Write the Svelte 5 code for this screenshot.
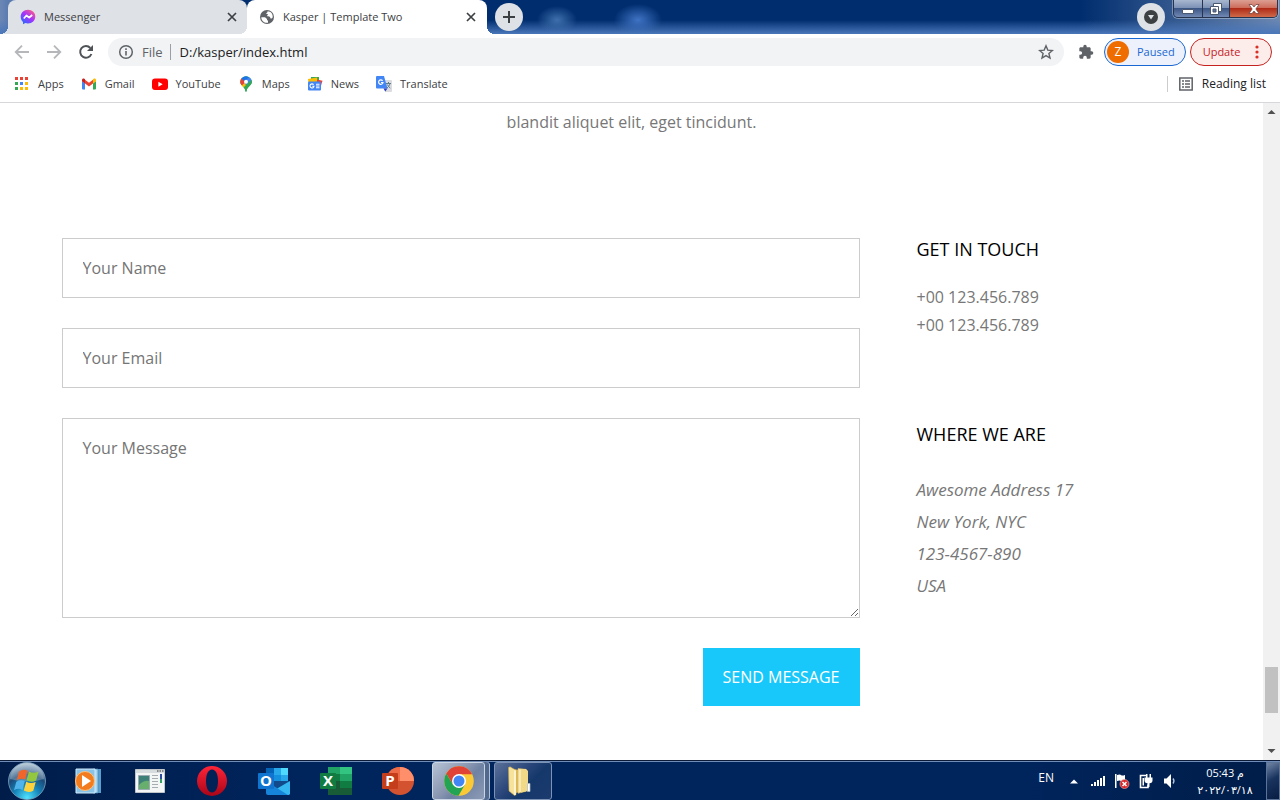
<script>
  const address = ['Awesome Address 17', 'New York, NYC', '123-4567-890', 'USA'];
  const dots = ['#ea4335', '#ea4335', '#ea4335', '#34a853', '#4285f4', '#fbbc04', '#34a853', '#fbbc04', '#fbbc04'];
  const bars = [2, 4, 6, 8, 10];
</script>

<div class="screen">
  <header class="strip">
    <nav class="tabs" aria-label="Tabs">
      <div class="tab idle">
        <svg width="16" height="16" viewBox="0 0 16 16">
          <defs>
            <linearGradient id="msg" x1="0" y1="1" x2=".8" y2="0">
              <stop offset="0" stop-color="#0a7cff" /><stop offset=".55" stop-color="#a033ff" /><stop offset="1" stop-color="#ff5c87" />
            </linearGradient>
          </defs>
          <path fill="url(#msg)" d="M8 .7C3.800.7.7 3.700.7 7.700c0 2.100.9 3.900 2.300 5.200v2.400l2.300-1.200c.9.200 1.700.3 2.700.3 4.200 0 7.300-3 7.300-7C15.300 3.700 12.200.7 8 .7z" />
          <path fill="none" stroke="#fff" stroke-width="1.700" stroke-linejoin="round" d="M3.800 9.500 6.400 6.500l2.800 2.200 3-2.700" />
        </svg>
        <span>Messenger</span>
        <button class="x" aria-label="Close Messenger"><svg width="10" height="10" viewBox="0 0 10 10"><path d="M1 1l8 8m0-8l-8 8" stroke="#3c4043" stroke-width="1.700" /></svg></button>
      </div>
      <div class="tab live">
        <svg width="16" height="16" viewBox="0 0 16 16">
          <circle cx="8" cy="8" r="7" fill="#5f6368" />
          <path fill="#fff" d="M2.300 8.200 6 8.300 8 10v1.200l1 .3v2.200c-3.600.6-6.700-2-6.700-5.500zM8.600 2.300C12 2.400 14 5 13.700 8.300c-.4.800-.9 1.300-1.700 1.300-.7 0-.6-1.400-1.300-1.900-.8-.4-2.500.2-2.500-.9 0-1 .8-.9.8-1.500s-1.600-.1-1.600-.9.900-.600 1-1.200z" />
        </svg>
        <span>Kasper | Template Two</span>
        <button class="x" aria-label="Close Kasper"><svg width="10" height="10" viewBox="0 0 10 10"><path d="M1 1l8 8m0-8l-8 8" stroke="#3c4043" stroke-width="1.700" /></svg></button>
      </div>
    </nav>
    <button class="round" aria-label="New tab"><svg width="14" height="14" viewBox="0 0 14 14"><path d="M7 1v12M1 7h12" stroke="#3c4043" stroke-width="2" /></svg></button>
    <div class="grow"></div>
    <button class="round search" aria-label="Search tabs"><svg width="14" height="14" viewBox="0 0 14 14"><circle cx="7" cy="7" r="7" fill="#3c4043" /><path d="M4 5h6L7 9.500z" fill="#dee1e6" /></svg></button>
    <div class="caption">
      <button class="min" aria-label="Minimize"><svg width="12" height="12" viewBox="0 0 12 12"><path d="M.5 6.500h11v4H.5z" fill="#fff" stroke="#4a5870" /></svg></button>
      <button aria-label="Restore"><svg width="12" height="12" viewBox="0 0 12 12"><path d="M3.500.5h8v8h-8z" fill="#fff" stroke="#4a5870" /><path d="M.5 3.500h8v8h-8z" fill="#fff" stroke="#4a5870" /><path d="M3 6h3v3H3z" fill="#5f759c" stroke="#4a5870" /></svg></button>
      <button class="close" aria-label="Close window"><svg width="12" height="10" viewBox="0 0 12 10"><path d="M1 .5h3l2 2.500 2-2.500h3L7.800 5l3.200 4.500H8L6 7 4 9.500H1L4.200 5z" fill="#fff" stroke="#6b3a3a" stroke-width=".7" /></svg></button>
    </div>
  </header>

  <div class="toolbar">
    <button class="tool" aria-label="Back"><svg width="16" height="16" viewBox="0 0 16 16"><path d="M15 8H2M8 1.700 1.700 8 8 14.300" fill="none" stroke="#b5b7ba" stroke-width="1.800" /></svg></button>
    <button class="tool" aria-label="Forward"><svg width="16" height="16" viewBox="0 0 16 16"><path d="M1 8h13M8 1.700 14.300 8 8 14.300" fill="none" stroke="#b5b7ba" stroke-width="1.800" /></svg></button>
    <button class="tool" aria-label="Reload"><svg width="16" height="16" viewBox="0 0 16 16"><path d="M13.400 10A5.800 5.800 0 1 1 12.300 4" fill="none" stroke="#4f5357" stroke-width="2" /><path d="M15 1v6H9z" fill="#4f5357" /></svg></button>
    <div class="omnibox">
      <svg width="16" height="16" viewBox="0 0 16 16"><circle cx="8" cy="8" r="6.300" fill="none" stroke="#5f6368" stroke-width="1.500" /><path d="M8 7v4.500M8 4.300v1.600" stroke="#5f6368" stroke-width="1.600" /></svg>
      <span class="file">File</span>
      <input aria-label="Address" value="D:/kasper/index.html" />
      <button class="tool" aria-label="Bookmark"><svg width="16" height="16" viewBox="0 0 16 16"><path d="M8 1.800l1.800 4.300 4.600.4-3.500 3 1.100 4.600L8 11.600l-4 2.500 1.100-4.600-3.500-3 4.600-.4z" fill="none" stroke="#5f6368" stroke-width="1.400" /></svg></button>
    </div>
    <button class="tool ext" aria-label="Extensions"><svg width="16" height="16" viewBox="0 0 24 24"><path fill="#5f6368" d="M20.500 11H19V7c0-1.100-.9-2-2-2h-4V3.500a2.500 2.500 0 0 0-5 0V5H4c-1.100 0-2 .9-2 2v3.800h1.500a2.700 2.700 0 0 1 0 5.400H2V20c0 1.100.9 2 2 2h3.800v-1.500a2.700 2.700 0 0 1 5.400 0V22H17c1.100 0 2-.9 2-2v-4h1.500a2.500 2.500 0 0 0 0-5z" /></svg></button>
    <button class="pill paused"><b>Z</b>Paused</button>
    <button class="pill update">Update<svg width="4" height="14" viewBox="0 0 4 14" fill="#d93025"><circle cx="2" cy="2" r="1.600" /><circle cx="2" cy="7" r="1.600" /><circle cx="2" cy="12" r="1.600" /></svg></button>
  </div>

  <nav class="bookmarks" aria-label="Bookmarks">
    <a href="#apps"><svg width="16" height="16" viewBox="0 0 16 16">{#each dots as c, i}<rect x={1 + (i % 3) * 5} y={1 + Math.floor(i / 3) * 5} width="3" height="3" fill={c} />{/each}</svg>Apps</a>
    <a href="#gmail"><svg width="16" height="16" viewBox="0 0 16 16"><path fill="#4285f4" d="M1 5l3 2.300V13.500H2a1 1 0 0 1-1-1z" /><path fill="#34a853" d="M12 7.300 15 5v7.500a1 1 0 0 1-1 1h-2z" /><path fill="#ea4335" d="M4 3.700l4 3 4-3v3.900l-4 3-4-3z" /><path fill="#c5221f" d="M1 4c0-1.500 1.400-2 2.400-1.200L4 3.300v4.300L1 5.300z" /><path fill="#fbbc04" d="M15 4c0-1.500-1.400-2-2.400-1.200l-.6.5v4.300l3-2.300z" /></svg>Gmail</a>
    <a href="#youtube"><svg width="16" height="16" viewBox="0 0 16 16"><rect y="2.500" width="16" height="11.500" rx="3" fill="#f00" /><path d="M6.400 5.700v5L10.700 8.200z" fill="#fff" /></svg>YouTube</a>
    <a href="#maps"><svg width="16" height="16" viewBox="0 0 16 16"><defs><clipPath id="pin"><path d="M8 .2a5.800 5.800 0 0 0-5.800 5.800C2.200 9.700 7 10.500 7.400 15c.1.900 1.100.9 1.200 0C9 10.500 13.800 9.700 13.800 6A5.800 5.800 0 0 0 8 .2z" /></clipPath></defs><g clip-path="url(#pin)"><path fill="#34a853" d="M0 0h16v16H0z" /><path fill="#fbbc04" d="M2 10 10 1v7l-5 5z" /><path fill="#4285f4" d="M6 6 12 0h4v5l-7 6z" /><path fill="#ea4335" d="M0 2h4l4 4-5 4z" /><path fill="#1a73e8" d="M3 2 8-1l3 2-4 5z" /><path fill="#34a853" d="M5 12 13 4h3v12H6z" /></g><circle cx="8" cy="5.800" r="2" fill="#fff" /></svg>Maps</a>
    <a href="#news"><svg width="16" height="16" viewBox="0 0 16 16"><path fill="#34a853" d="M4 1h8v5H4z" /><path fill="#fbbc04" d="M1 3l9-1.500.5 4L1.500 7z" /><path fill="#ea4335" d="M10 3.500l5.500 1.200-1.500 5-4-1z" /><rect x="1" y="5.500" width="13" height="9" rx="1" fill="#4285f4" /><path fill="none" stroke="#fff" stroke-width="1.100" d="M6.600 8.700A2 2 0 1 0 7 10.200H5.300M9 8.300h3.500M9 10h3.500M9 11.800h3.500" /></svg>News</a>
    <a href="#translate"><svg width="16" height="16" viewBox="0 0 16 16"><path fill="#dadce0" d="M6 4h9a1 1 0 0 1 1 1v10a1 1 0 0 1-1 1H9z" /><path fill="#4285f4" d="M1 0h7l3.500 12.500H1a1 1 0 0 1-1-1V1a1 1 0 0 1 1-1z" /><path fill="#3040c0" d="M7.500 12.500h4L9.300 15.500z" /><path fill="none" stroke="#fff" stroke-width="1.200" d="M6.600 4.800A2.200 2.200 0 1 0 7 6.500H5" /><path fill="none" stroke="#607d8b" d="M10 7.500h5M12.500 6v1.500M14 7.500c-.5 2-1.800 3.500-3 4.500M11.300 8.500c.7 1.500 1.700 2.600 3 3.500" /></svg>Translate</a>
    <div class="grow"></div>
    <a href="#reading" class="reading"><svg width="16" height="16" viewBox="0 0 16 16"><path fill="none" stroke="#5f6368" stroke-width="1.500" d="M1.800 2h12.400v12H1.800z" /><path stroke="#5f6368" stroke-width="1.500" d="M4 5h2M7 5h5M4 8h2M7 8h5M4 11h2M7 11h5" /></svg>Reading list</a>
  </nav>

  <div class="view">
    <main>
      <p class="lead">blandit aliquet elit, eget tincidunt.</p>
      <div class="contact">
        <form onsubmit={(e) => e.preventDefault()}>
          <input type="text" aria-label="Your Name" placeholder="Your Name" />
          <input type="email" aria-label="Your Email" placeholder="Your Email" />
          <textarea aria-label="Your Message" placeholder="Your Message"></textarea>
          <button type="submit">SEND MESSAGE</button>
        </form>
        <aside>
          <h4>GET IN TOUCH</h4>
          <p class="phones">+00 123.456.789<br />+00 123.456.789</p>
          <h4>WHERE WE ARE</h4>
          <address>{#each address as line}<span>{line}</span>{/each}</address>
        </aside>
      </div>
    </main>
    <div class="scroll">
      <svg width="17" height="17" viewBox="0 0 17 17"><path d="M4.500 11h8L8.500 7z" fill="#505050" /></svg>
      <div class="track"><div class="thumb"></div></div>
      <svg width="17" height="17" viewBox="0 0 17 17"><path d="M4.500 6h8L8.500 10z" fill="#505050" /></svg>
    </div>
  </div>

  <footer class="taskbar">
    <button class="start" aria-label="Start">
      <svg width="40" height="40" viewBox="0 0 40 40">
        <defs><radialGradient id="orb" cx=".5" cy=".95" r=".9"><stop offset="0" stop-color="#4fe3ff" /><stop offset=".4" stop-color="#1583b8" /><stop offset=".7" stop-color="#1c4a78" /><stop offset="1" stop-color="#9ab4c8" /></radialGradient></defs>
        <circle cx="20" cy="20" r="18.500" fill="url(#orb)" stroke="#8fb3cc" stroke-opacity=".7" />
        <path d="M3 18a17 16 0 0 1 34 0q-17 5-34 0z" fill="#fff" opacity=".25" />
        <path d="M12 10.500q4.500-3 8.500-.8L18.200 18.600q-4-2-8.500.6z" fill="#f0652a" />
        <path d="M22 10.500q4.500 2.500 9.500 0l-2.400 9q-4.700 2.500-9.500-.2z" fill="#93c83e" />
        <path d="M9.300 20.700q4.500-2.600 8.500-.6l-2.300 8.800q-4-2.300-8.500.4z" fill="#4fb4ec" />
        <path d="M19.200 20.800q4.700 2.500 9.500.2l-2.400 8.800q-4.800 2.500-9.500-.2z" fill="#fdd23c" />
      </svg>
    </button>
    <button class="app" aria-label="Media Player"><svg width="30" height="30" viewBox="0 0 30 30"><path fill="#5aa0cf" d="M22 3h6v24h-6z" /><path fill="#a6d5ef" d="M20 3h5v24h-5z" stroke="#4384b4" stroke-width=".7" /><path fill="#89c3e8" stroke="#d2ecfb" d="M3 3h19v24H3z" /><circle cx="12" cy="15" r="9.500" fill="#f37d1e" stroke="#ffc27e" /><path d="M9 9v12l9-6z" fill="#fff" /></svg></button>
    <button class="app" aria-label="Viewer"><svg width="30" height="30" viewBox="0 0 30 30"><path fill="#f4f5f5" stroke="#bfc5c9" d="M.5 3.500h29v23H.5z" /><path fill="#d7dcdf" d="M1 4h28v3H1z" /><path d="M22 5h1.500M24.500 5H26M27 5h1.500" stroke="#333" /><path fill="#3d8078" stroke="#9baab0" d="M3.500 9.500h11v14h-11z" /><path fill="#68ae6c" d="M4 19q5-5 10-4v8H4z" /><path d="M17 9.500h6M17 12.500h6M17 15.500h6M17 18.500h6M17 21.500h6" stroke="#a5adb1" /><path fill="#284ba0" d="M25 8h2v5h-2z" /><path fill="#36a063" d="M25 13h2v4h-2z" /></svg></button>
    <button class="app" aria-label="Opera"><svg width="30" height="30" viewBox="0 0 30 30"><defs><linearGradient id="op" x2="0" y2="1"><stop stop-color="#ff2438" /><stop offset="1" stop-color="#a80518" /></linearGradient></defs><path fill="url(#op)" fill-rule="evenodd" d="M15 0a15 15 0 1 0 0 30 15 15 0 0 0 0-30zm0 3.500c4 0 6 5 6 11.500s-2 11.500-6 11.500S9 21.500 9 15s2-11.500 6-11.500z" /></svg></button>
    <button class="app" aria-label="Outlook"><svg width="32" height="30" viewBox="0 0 32 30"><path fill="#1490df" d="M8 2h22v20H8z" /><path fill="#0364b8" d="M8 2h8v7H8z" /><path fill="#28a8ea" d="M16 2h7v7h-7zM23 9h7v7h-7z" /><path fill="#50d9ff" d="M23 2h7v7h-7z" /><path fill="#0a5aa5" d="M8 17h7v6H8z" /><path fill="#114b8b" d="M8 15h24l-12 9z" /><path fill="#35b8f1" d="M32 15v13a2 2 0 0 1-2 1H10l10-7z" /><path fill="#1685d9" d="M8 15l22 14H10a2 2 0 0 1-2-2z" /><rect y="7" width="16" height="16" rx="1" fill="#0f75d0" /><text x="8" y="20" text-anchor="middle">O</text></svg></button>
    <button class="app" aria-label="Excel"><svg width="32" height="30" viewBox="0 0 32 30"><path fill="#21a366" d="M8 1h12v7H8z" /><path fill="#33c481" d="M20 1h12v7H20z" /><path fill="#107c41" d="M8 8h12v7H8z" /><path fill="#21a366" d="M20 8h12v7H20z" /><path fill="#185c37" d="M8 15h12v14H8zM20 22h12v7H20z" /><path fill="#107c41" d="M20 15h12v7H20z" /><rect y="7" width="16" height="16" rx="1" fill="#107c41" /><text x="8" y="20" text-anchor="middle">X</text></svg></button>
    <button class="app" aria-label="PowerPoint"><svg width="32" height="30" viewBox="0 0 32 30"><circle cx="18" cy="15" r="14" fill="#d35230" /><path fill="#ed6c47" d="M4 15A14 14 0 0 1 18 1v14z" /><path fill="#ff8f6b" d="M18 1a14 14 0 0 1 14 14H18z" /><rect y="7" width="16" height="16" rx="1" fill="#c43e1c" /><text x="8" y="20" text-anchor="middle">P</text></svg></button>
    <button class="app open" aria-label="Chrome"><svg width="30" height="30" viewBox="0 0 30 30"><circle cx="15" cy="15" r="14.800" fill="#fbc935" /><path fill="#e04335" d="M15 15V8.300h13.200A14.800 14.800 0 0 0 2.200 7.600L9 18.500z" /><path fill="#23a455" d="M2.200 7.600A14.800 14.800 0 0 0 14.500 29.800L21 18.500 15 15l-6 3.500z" /><circle cx="15" cy="15" r="7" fill="#fff" /><circle cx="15" cy="15" r="5.500" fill="#4285f4" /></svg></button>
    <button class="app window" aria-label="Explorer">
      <svg width="30" height="32" viewBox="0 0 30 32">
        <path fill="#e3bf5c" d="M5 3.500 14 5v22l-6 2z" />
        <path fill="#f8eab2" stroke="#d0ad54" stroke-width=".6" d="M13 3.500l8 .8v22l-8 2z" />
        <path fill="#f1d988" d="M16 4.200l5-.2 2 2v20l-7 1.500z" />
        <path fill="#f6e29a" stroke="#caa64b" stroke-width=".6" d="M3.500 2.500 5 1.800l6 3.400v24.500l-1.500.8-5.500-4.500z" />
        <path fill="#fbf3cd" d="M9 5.500l2-.3v24.500l-2 .3z" />
        <path fill="#fff" stroke="#a9bdc6" stroke-width=".7" d="M22.500 18.500h2.500v8h-2.500z" />
      </svg>
    </button>
    <div class="grow"></div>
    <span class="lang">EN</span>
    <div class="tray">
      <svg width="16" height="16" viewBox="0 0 16 16"><path d="M4 10.500h8L8 6.500z" fill="#fff" /></svg>
      <svg width="16" height="16" viewBox="0 0 16 16">{#each bars as h, i}<rect x={1 + i * 3} y={13 - h} width="2" height={h} fill="#fff" />{/each}</svg>
      <svg width="16" height="16" viewBox="0 0 16 16"><path d="M1 1h1.500v14H1zM3 2q3-1 4 0t4 0v6q-3 1-4 0t-4 0z" fill="#fff" /><circle cx="10.500" cy="11" r="4.500" fill="#dc2626" stroke="#f4b3b3" stroke-width=".6" /><path d="M8.500 9l4 4m0-4l-4 4" stroke="#fff" stroke-width="1.500" /></svg>
      <svg width="16" height="16" viewBox="0 0 16 16"><path d="M8 2.500H2.500v12H10v-3" fill="none" stroke="#fff" stroke-width="1.600" /><path d="M4.500 5H6v7.500H4.500z" fill="#fff" /><path d="M6.500 4.500h8v3q0 2.500-3 2.800V14H9.500v-3.700q-3-.3-3-2.800zM8 1h1.500v3.500H8zM11.500 1H13v3.500h-1.500z" fill="#fff" /></svg>
      <svg width="16" height="16" viewBox="0 0 16 16"><path d="M2 5.500h2.500L9 1v14l-4.500-4.500H2z" fill="#fff" /><path d="M11 5.500q2 2.500 0 5" fill="none" stroke="#b8c7de" stroke-width="1.300" /></svg>
    </div>
    <div class="clock"><span>05:43 م</span><span>٢٠٢٢/٠٣/١٨</span></div>
    <button class="desk" aria-label="Show desktop"></button>
  </footer>
</div>

<style>
  :global(body) { margin: 0; }
  .screen { display: flex; flex-direction: column; height: 100vh; overflow: hidden; background: #fff; font: 11px/16px "Open Sans", "Noto Sans", sans-serif; color: #3c4043; }
  .screen * { box-sizing: border-box; }
  svg { display: block; flex: none; }
  button { border: 0; padding: 0; background: none; font: inherit; color: inherit; display: flex; align-items: center; justify-content: center; }
  .grow { flex: 1; }

  .strip {
    display: flex; align-items: flex-start; height: 34px; flex: none; padding: 0 2px 0 8px;
    background:
      radial-gradient(ellipse 20px 14px at 557px 20px, #3f70ac, transparent),
      radial-gradient(ellipse 24px 16px at 638px 20px, #3f73c4, transparent),
      linear-gradient(to top, #4a77ba, #4a77ba00 14px),
      linear-gradient(to right, #6c87b4 0, #5b7cb0 8px, #002d6e 240px, #002d6e 1080px, #6c88b2 100%);
  }
  .tabs { display: flex; height: 34px; }
  .tab { position: relative; display: flex; align-items: center; width: 240px; padding: 0 11px 0 12px; border-radius: 8px 8px 0 0; }
  .tab span { flex: 1; margin-left: 8px; }
  .idle { background: #dee1e6; width: 239px; padding-right: 10px; }
  .live { background: #fff; }
  .tab::before, .live::after { content: ""; position: absolute; bottom: 0; left: -8px; width: 8px; height: 8px; background: radial-gradient(circle at 0 0, transparent 8px, #dee1e6 8px); }
  .live::before { background: radial-gradient(circle at 0 0, transparent 8px, #fff 8px); }
  .live::after { left: auto; right: -8px; background: radial-gradient(circle at 100% 0, transparent 8px, #fff 8px); }
  .x { width: 10px; height: 16px; }
  .round { width: 28px; height: 28px; border-radius: 50%; background: #dee1e6; margin: 3px 0 0 8px; }
  .search { margin-right: 8px; }
  .caption { display: flex; height: 18px; border: 1px solid #26344f; border-top: 0; border-radius: 0 0 5px 5px; overflow: hidden; box-shadow: 0 0 0 1px #b9c8e088; }
  .caption button { width: 27px; border-right: 1px solid #26344f; background: linear-gradient(#a8b7cf, #7d92b6 45%, #3c5686 50%, #7189b3); }
  .caption .min { width: 29px; }
  .caption .close { width: 47px; border: 0; background: linear-gradient(#dca093, #cd6d5c 45%, #b02c18 50%, #cf6a4a); }

  .toolbar { display: flex; align-items: center; height: 36px; flex: none; padding: 0 8px 0 6px; }
  .tool { width: 32px; height: 28px; }
  .omnibox { flex: 1; display: flex; align-items: center; height: 28px; border-radius: 14px; background: #f1f3f4; margin-left: 6px; padding: 0 2px 0 10px; font-size: 13px; }
  .file { margin-left: 8px; padding-right: 7px; border-right: 1px solid #9aa0a6; color: #5f6368; }
  .omnibox input { flex: 1; min-width: 0; border: 0; padding: 0 0 0 9px; background: none; font: inherit; color: #202124; outline: 0; }
  .ext { width: 28px; margin: 0 4px 0 8px; }
  .pill { height: 28px; border: 1px solid; border-radius: 14px; }
  .paused { width: 82px; color: #1967d2; background: #ecf1fb; justify-content: flex-start; padding-left: 2px; }
  .paused b { width: 22px; line-height: 22px; border-radius: 50%; background: #ef6c00; color: #fff; font-size: 12px; font-weight: 400; margin-right: 8px; }
  .update { width: 82px; margin-left: 4px; color: #c5221f; background: #fcecea; gap: 15px; }

  .bookmarks { display: flex; align-items: center; height: 33px; flex: none; padding: 0 14px 4px 14px; border-bottom: 1px solid #d5d7da; gap: 17px; }
  .bookmarks a { display: flex; align-items: center; gap: 8px; color: inherit; text-decoration: none; }
  .bookmarks .reading { border-left: 1px solid #ccc; padding-left: 10px; color: #202124; font-size: 12px; }

  .view { flex: 1; min-height: 0; display: flex; }
  main { flex: 1; min-width: 0; overflow: hidden; font-size: 16px; line-height: 28px; color: #777; }
  .lead { margin: 5px 0 102px; text-align: center; }
  .contact { display: flex; justify-content: space-between; max-width: 1170px; margin: 0 auto; padding: 0 15px; }
  form { flex-basis: 70%; display: flex; flex-direction: column; gap: 30px; }
  form input, textarea { display: block; width: 100%; height: 60px; border: 1px solid #ccc; padding: 0 20px; background: #fff; font: 16px/22px "Open Sans", sans-serif; outline: 0; }
  form ::placeholder { color: #757575; }
  textarea { height: 200px; padding: 18px 20px; resize: vertical; }
  form button { align-self: flex-end; padding: 18px 20px; background: #19c8fa; color: #fff; line-height: 22px; }
  aside { flex-basis: 25%; }
  h4 { margin: 0; font-size: 18px; line-height: 22px; font-weight: 400; color: #000; }
  .phones { margin: 23px 0 84px; }
  address { margin-top: 29px; font-size: 17px; line-height: 32px; }
  address span { display: block; }
  .scroll { width: 17px; display: flex; flex-direction: column; background: #f1f1f1; }
  .track { flex: 1; display: flex; flex-direction: column; justify-content: flex-end; padding: 0 2px 30px; }
  .thumb { height: 46px; background: #c1c1c1; }

  .taskbar { display: flex; align-items: center; height: 40px; flex: none; border-top: 1px solid #0c1c38; box-shadow: inset 0 1px #6f8db6; background: linear-gradient(to right, #001d4a, #00245c 300px, #00245c 80%, #001d48); color: #fff; }
  .start { width: 57px; height: 39px; padding-right: 3px; }
  .app { width: 62px; height: 38px; }
  .app text { font: 700 15px "Open Sans", sans-serif; fill: #fff; }
  .open { width: 53px; margin: 0 9px 0 3px; border: 1px solid #c9d4e4; border-radius: 3px; background: linear-gradient(135deg, #b7c2d4, #8795b0 45%, #6f82a3 60%, #8c9bb6); box-shadow: 4px 0 #51688f, 5px 0 #b2c0d6; }
  .window { width: 58px; padding-right: 6px; border: 1px solid #7d93b6; border-radius: 3px; background: linear-gradient(135deg, #5b7299, #2a467a 40%, #15386b 60%, #1c3a6e); }
  .lang { margin: 0 12px 6px 0; font-size: 12px; }
  .tray { display: flex; gap: 8px; margin-right: 6px; }
  .clock { display: flex; flex-direction: column; align-items: center; width: 82px; line-height: 17px; font-family: "Open Sans", "DejaVu Sans", sans-serif; }
  .desk { width: 14px; height: 38px; border: 1px solid #5c7398; background: linear-gradient(150deg, #7286a6, #19345f 45%, #071c42); }
</style>
